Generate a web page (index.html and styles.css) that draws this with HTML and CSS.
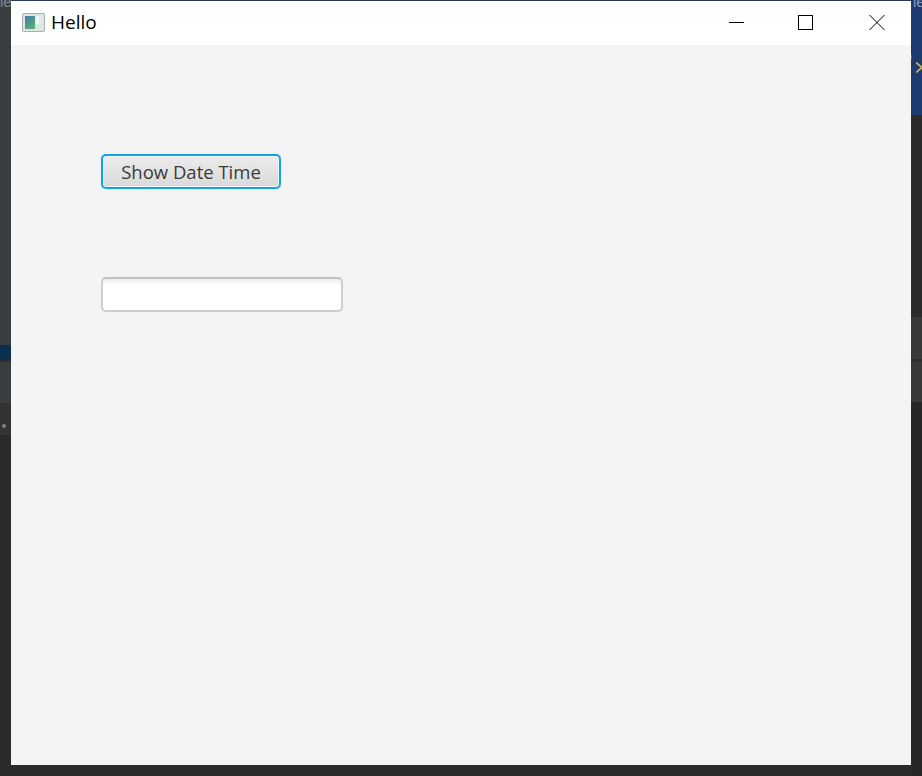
FILE: index.html
```html
<!DOCTYPE html>
<html lang="en">
<head>
<meta charset="utf-8">
<title>Hello</title>
<link rel="stylesheet" href="styles.css">
</head>
<body>
<div class="desktop">
  <div class="strip-top"></div>
  <div class="side side-left">
    <div class="band l1"><span class="frag frag-left">le</span></div>
    <div class="band l2"></div>
    <div class="band l3"></div>
    <div class="band l4"></div>
    <div class="band l5"><span class="dot"></span></div>
    <div class="band l6"></div>
  </div>
  <div class="side side-right">
    <div class="band r1">
      <span class="frag frag-right">le</span>
      <span class="mark"></span>
      <svg class="chev" width="6" height="11" viewBox="0 0 6 11"><path d="M0 0.500L6 5.500L0 10.500" stroke="#d8b64f" stroke-width="1.700" fill="none"/></svg>
    </div>
    <div class="band r2"></div>
    <div class="band r3"></div>
    <div class="band r4"></div>
    <div class="band r5"></div>
    <div class="band r6"></div>
  </div>
  <main class="window">
    <header class="titlebar">
      <svg class="app-icon" width="23" height="19" viewBox="0 0 23 19">
        <defs>
          <linearGradient id="pane" x1="0" y1="0" x2="0.600" y2="1">
            <stop offset="0" stop-color="#3f7fae"/>
            <stop offset="1" stop-color="#5cab76"/>
          </linearGradient>
        </defs>
        <rect x="0.500" y="0.500" width="22" height="18" rx="1.500" fill="#dfe4e7" stroke="#a9adb1"/>
        <rect x="3" y="3" width="10" height="13" fill="url(#pane)"/>
        <rect x="14" y="3" width="3" height="13" fill="#f4f7f7"/>
        <rect x="17" y="3" width="3" height="7" fill="#e3e8ea"/>
        <rect x="14" y="11" width="6" height="5" fill="#d8ebdc"/>
      </svg>
      <span class="title">Hello</span>
      <div class="controls">
        <svg class="ctl ctl-min" width="16" height="16" viewBox="0 0 16 16"><path d="M0 7.500H15" stroke="#000" fill="none"/></svg>
        <svg class="ctl ctl-max" width="16" height="16" viewBox="0 0 16 16"><rect x="1.500" y="0.500" width="14" height="14" stroke="#000" fill="none"/></svg>
        <svg class="ctl ctl-close" width="16" height="16" viewBox="0 0 16 16"><path d="M0.500 0L15.500 15M15.500 0L0.500 15" stroke="#000" stroke-width="1" fill="none"/></svg>
      </div>
    </header>
    <div class="content">
      <button class="btn" type="button">Show Date Time</button>
      <input class="field" type="text" aria-label="Date time">
    </div>
  </main>
</div>
</body>
</html>
```

FILE: styles.css
```css
* { box-sizing: border-box; }
html, body { margin: 0; padding: 0; }
body { width: 922px; height: 776px; overflow: hidden; }

.desktop {
  position: relative;
  width: 922px;
  height: 776px;
  background: #2a2a2a;
  display: flex;
  justify-content: space-between;
}

.strip-top {
  position: absolute;
  left: 0;
  top: 0;
  width: 922px;
  height: 1px;
  background: #2a3a58;
}

.side { display: flex; flex-direction: column; width: 11px; height: 776px; overflow: hidden; }
.band { flex: none; position: relative; overflow: hidden; }

.frag {
  position: absolute;
  top: -7px;
  font: 15px/18px "Liberation Sans", sans-serif;
  color: #7d8a94;
}
.frag-left { left: 0; }
.frag-right { left: 2px; color: #8b9bb5; }

.l1 { height: 345px; background: #3a3d40; }
.l2 { height: 15px; background: #0b2f4e; }
.l3 { height: 2px; background: #2e3032; }
.l4 { height: 41px; background: #3a3d40; }
.l5 { height: 32px; background: #333333; }
.l6 { height: 341px; background: #2a2a2a; }
.dot {
  position: absolute;
  left: 2px;
  top: 21px;
  width: 4px;
  height: 4px;
  border-radius: 50%;
  background: #77838d;
}

.r1 { height: 115px; background: #1e3a72; }
.r2 { height: 202px; background: #2b2b2b; }
.r3 { height: 42px; background: #37393b; }
.r4 { height: 3px; background: #2c2e30; }
.r5 { height: 40px; background: #37393b; }
.r6 { height: 374px; background: #272727; }
.mark {
  position: absolute;
  left: 0;
  top: 55px;
  width: 1px;
  height: 4px;
  background: #8a5a50;
}
.chev {
  position: absolute;
  left: 5px;
  top: 62px;
}

.window {
  position: absolute;
  left: 11px;
  top: 1px;
  width: 900px;
  height: 764px;
  background: #f4f4f4;
  display: flex;
  flex-direction: column;
}

.titlebar {
  flex: none;
  height: 44px;
  background: #fff;
  display: flex;
  align-items: center;
  padding: 0 0 2px 11px;
}
.app-icon { flex: none; margin-right: 6px; }
.title {
  font: 19px/24px "Open Sans", "Noto Sans", sans-serif;
  color: #000;
}
.controls {
  margin-left: auto;
  margin-right: 26px;
  margin-top: 2px;
  display: flex;
  align-items: center;
}
.ctl { display: block; flex: none; }
.ctl-max { margin-left: 52px; }
.ctl-close { margin-left: 56px; }

.content {
  flex: 1;
  display: flex;
  flex-direction: column;
  align-items: flex-start;
  padding: 109px 0 0 90px;
}

.btn {
  width: 180px;
  height: 35px;
  padding: 0;
  border: 2px solid #12a5de;
  border-radius: 5px;
  background: linear-gradient(#ececec, #d9d9d9);
  box-shadow: inset 0 0 0 1px #f2f6f8, 0 0 1px #7fcdec;
  font: 18.500px/24px "Open Sans", "Noto Sans", sans-serif;
  color: #3a3a3a;
}

.field {
  width: 242px;
  height: 35px;
  margin-top: 88px;
  border: 2px solid #cdcdcd;
  border-top-color: #c2c2c2;
  border-radius: 5px;
  background: linear-gradient(#ececec, #ffffff 6px);
  outline: none;
}
```
